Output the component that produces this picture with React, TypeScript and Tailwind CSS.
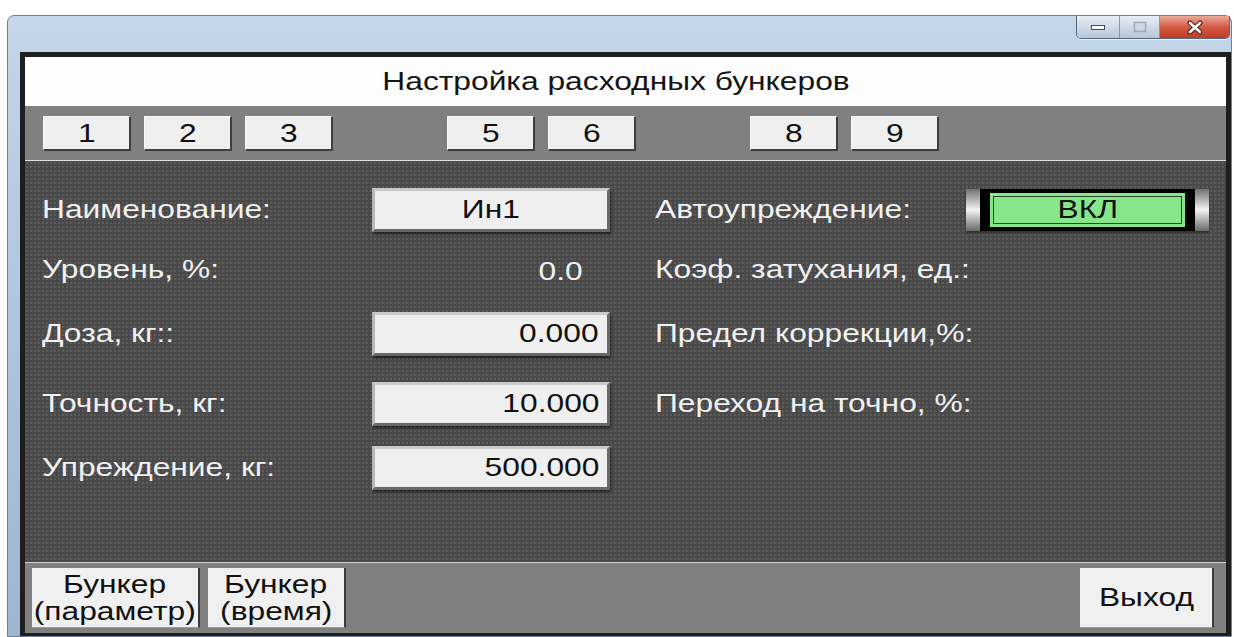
import type { ReactNode } from "react";

// Text in this HMI screen is rendered wide, so glyphs are stretched horizontally.
function Wide({
  children,
  align = "left",
}: {
  children: ReactNode;
  align?: "left" | "right" | "center";
}) {
  const origin =
    align === "left" ? "origin-left" : align === "right" ? "origin-right" : "origin-center";
  return <span className={`inline-block scale-x-[1.27] ${origin}`}>{children}</span>;
}

const tabs: (number | null)[] = [1, 2, 3, null, 5, 6, null, 8, 9];

const TabButton = ({ n }: { n: number | null }) =>
  n === null ? (
    <div className="w-[88px] h-[35px]" />
  ) : (
    <button className="w-[88px] h-[35px] bg-[#efefef] border-t border-l border-t-[#fafafa] border-l-[#fafafa] border-r-2 border-b-2 border-r-[#3e3e3e] border-b-[#3e3e3e] text-[25px] leading-none text-[#111] flex items-center justify-center">
      <Wide align="center">{n}</Wide>
    </button>
  );

const ValueBox = ({ children, center = false }: { children: ReactNode; center?: boolean }) => (
  <div
    className={`h-[44px] w-full bg-[#efefef] border-[3px] border-t-[#c9c9c9] border-l-[#b8b8b8] border-r-[#686868] border-b-[#686868] shadow-[1px_2px_2px_rgba(0,0,0,0.55)] flex items-center text-[25px] text-[#111] ${
      center ? "justify-center" : "justify-end pr-[8px]"
    }`}
  >
    <Wide align={center ? "center" : "right"}>{children}</Wide>
  </div>
);

const Label = ({ children, right = false }: { children: ReactNode; right?: boolean }) => (
  <div className={`text-[25px] text-[#f1f1f1] whitespace-nowrap ${right ? "pl-[45px]" : ""}`}>
    <Wide>{children}</Wide>
  </div>
);

const AutoToggle = () => (
  <div className="h-[42px] w-[243px] flex shadow-[0_2px_2px_rgba(0,0,0,0.4)]">
    <div className="w-[14px] h-full bg-linear-to-b from-[#737373] via-[#f4f4f4] to-[#6a6a6a]" />
    <div className="flex-1 bg-black px-[10px] py-[4px]">
      <div className="h-full bg-[#88e68a] p-[3px]">
        <div className="h-full border border-[#2c4a2c] flex items-center justify-center text-[25px] text-[#0f140f]">
          <Wide align="center">ВКЛ</Wide>
        </div>
      </div>
    </div>
    <div className="w-[14px] h-full bg-linear-to-b from-[#737373] via-[#f4f4f4] to-[#6a6a6a]" />
  </div>
);

const FooterButton = ({ children, w }: { children: ReactNode; w: string }) => (
  <button
    className={`${w} h-[60px] bg-[#f0f0f0] border-r-2 border-b border-r-[#3a3a3a] border-b-[#9a9a9a] flex flex-col items-center justify-center text-[25px] leading-[27px] text-[#111]`}
  >
    {children}
  </button>
);

export default function App() {
  return (
    <div className="w-[1234px] h-[637px] bg-white pt-[15px] pl-[7px] overflow-hidden font-['Liberation_Sans',Arial,sans-serif]">
      <div className="w-[1225px] h-[622px] rounded-t-[7px] border border-[#6f8196] bg-linear-to-b from-[#c4d6e8] via-[#aec5dc] to-[#9db6cf] flex flex-col">
        {/* glass caption with window controls */}
        <div className="h-[36px] flex justify-end items-start pr-[1px] shrink-0">
          <div className="flex h-[23px] rounded-b-[5px] border border-t-0 border-[#56677c] overflow-hidden shadow-[0_1px_0_rgba(255,255,255,0.6)]">
            <div className="w-[43px] h-full bg-linear-to-b from-[#e7eef5] to-[#b7c7d8] border-r border-[#8796a8] flex items-center justify-center">
              <svg width="16" height="8" viewBox="0 0 16 8">
                <rect x="1.5" y="2.5" width="13" height="4" fill="#fff" stroke="#3d4a5c" />
              </svg>
            </div>
            <div className="w-[40px] h-full bg-linear-to-b from-[#e7eef5] to-[#b7c7d8] border-r border-[#8796a8] flex items-center justify-center">
              <svg width="14" height="12" viewBox="0 0 14 12">
                <rect x="1.5" y="1.5" width="11" height="9" fill="none" stroke="#9aa9b8" strokeWidth="1.5" />
                <rect x="3.5" y="4" width="7" height="4.5" fill="none" stroke="#c8d3de" />
              </svg>
            </div>
            <div className="w-[69px] h-full bg-linear-to-b from-[#eaa99a] via-[#d45a43] to-[#c23a22] flex items-center justify-center">
              <svg width="20" height="15" viewBox="0 0 20 15">
                <path d="M5 3 L15 12 M15 3 L5 12" stroke="#5a2318" strokeWidth="5" strokeLinecap="round" />
                <path d="M5 3 L15 12 M15 3 L5 12" stroke="#ffffff" strokeWidth="2.6" strokeLinecap="round" />
              </svg>
            </div>
          </div>
        </div>

        {/* application screen */}
        <div className="ml-[12px] flex-1 border-[5px] border-b-[3px] border-[#1e1e1e] flex flex-col">
          <div className="h-[49px] bg-[#fdfdfd] flex items-center justify-center pr-[20px] text-[25px] text-[#141414]">
            <Wide align="center">Настройка расходных бункеров</Wide>
          </div>

          <div className="h-[55px] bg-[#808080] border-b border-[#e4e4e4] pl-[18px] pt-[10px] flex gap-[13px] items-start">
            {tabs.map((n, i) => (
              <TabButton key={i} n={n} />
            ))}
          </div>

          <div className="h-[401px] bg-[#494949] bg-[radial-gradient(circle,#5b5b5b_0.9px,transparent_1.3px)] bg-[length:4px_4px] pl-[17px] pt-[19px]">
            <div className="grid grid-cols-[330px_238px_356px_243px] grid-rows-[60px_60px_68px_72px_56px] items-center">
              <Label>Наименование:</Label>
              <ValueBox center>Ин1</ValueBox>
              <Label right>Автоупреждение:</Label>
              <AutoToggle />

              <Label>Уровень, %:</Label>
              <div className="text-[25px] text-[#f1f1f1] text-right pr-[27px] pt-[4px]">
                <Wide align="right">0.0</Wide>
              </div>
              <Label right>Коэф. затухания, ед.:</Label>
              <div />

              <Label>Доза, кг::</Label>
              <ValueBox>0.000</ValueBox>
              <Label right>Предел коррекции,%:</Label>
              <div />

              <Label>Точность, кг:</Label>
              <ValueBox>10.000</ValueBox>
              <Label right>Переход на точно, %:</Label>
              <div />

              <Label>Упреждение, кг:</Label>
              <ValueBox>500.000</ValueBox>
              <div />
              <div />
            </div>
          </div>

          <div className="flex-1 bg-[#808080] border-t border-[#d0d0d0] pl-[7px] pr-[12px] pt-[5px] flex gap-[8px] items-start">
            <FooterButton w="w-[168px]">
              <Wide align="center">Бункер</Wide>
              <Wide align="center">(параметр)</Wide>
            </FooterButton>
            <FooterButton w="w-[138px]">
              <Wide align="center">Бункер</Wide>
              <Wide align="center">(время)</Wide>
            </FooterButton>
            <div className="flex-1" />
            <FooterButton w="w-[134px]">
              <Wide align="center">Выход</Wide>
            </FooterButton>
          </div>
        </div>
      </div>
    </div>
  );
}
